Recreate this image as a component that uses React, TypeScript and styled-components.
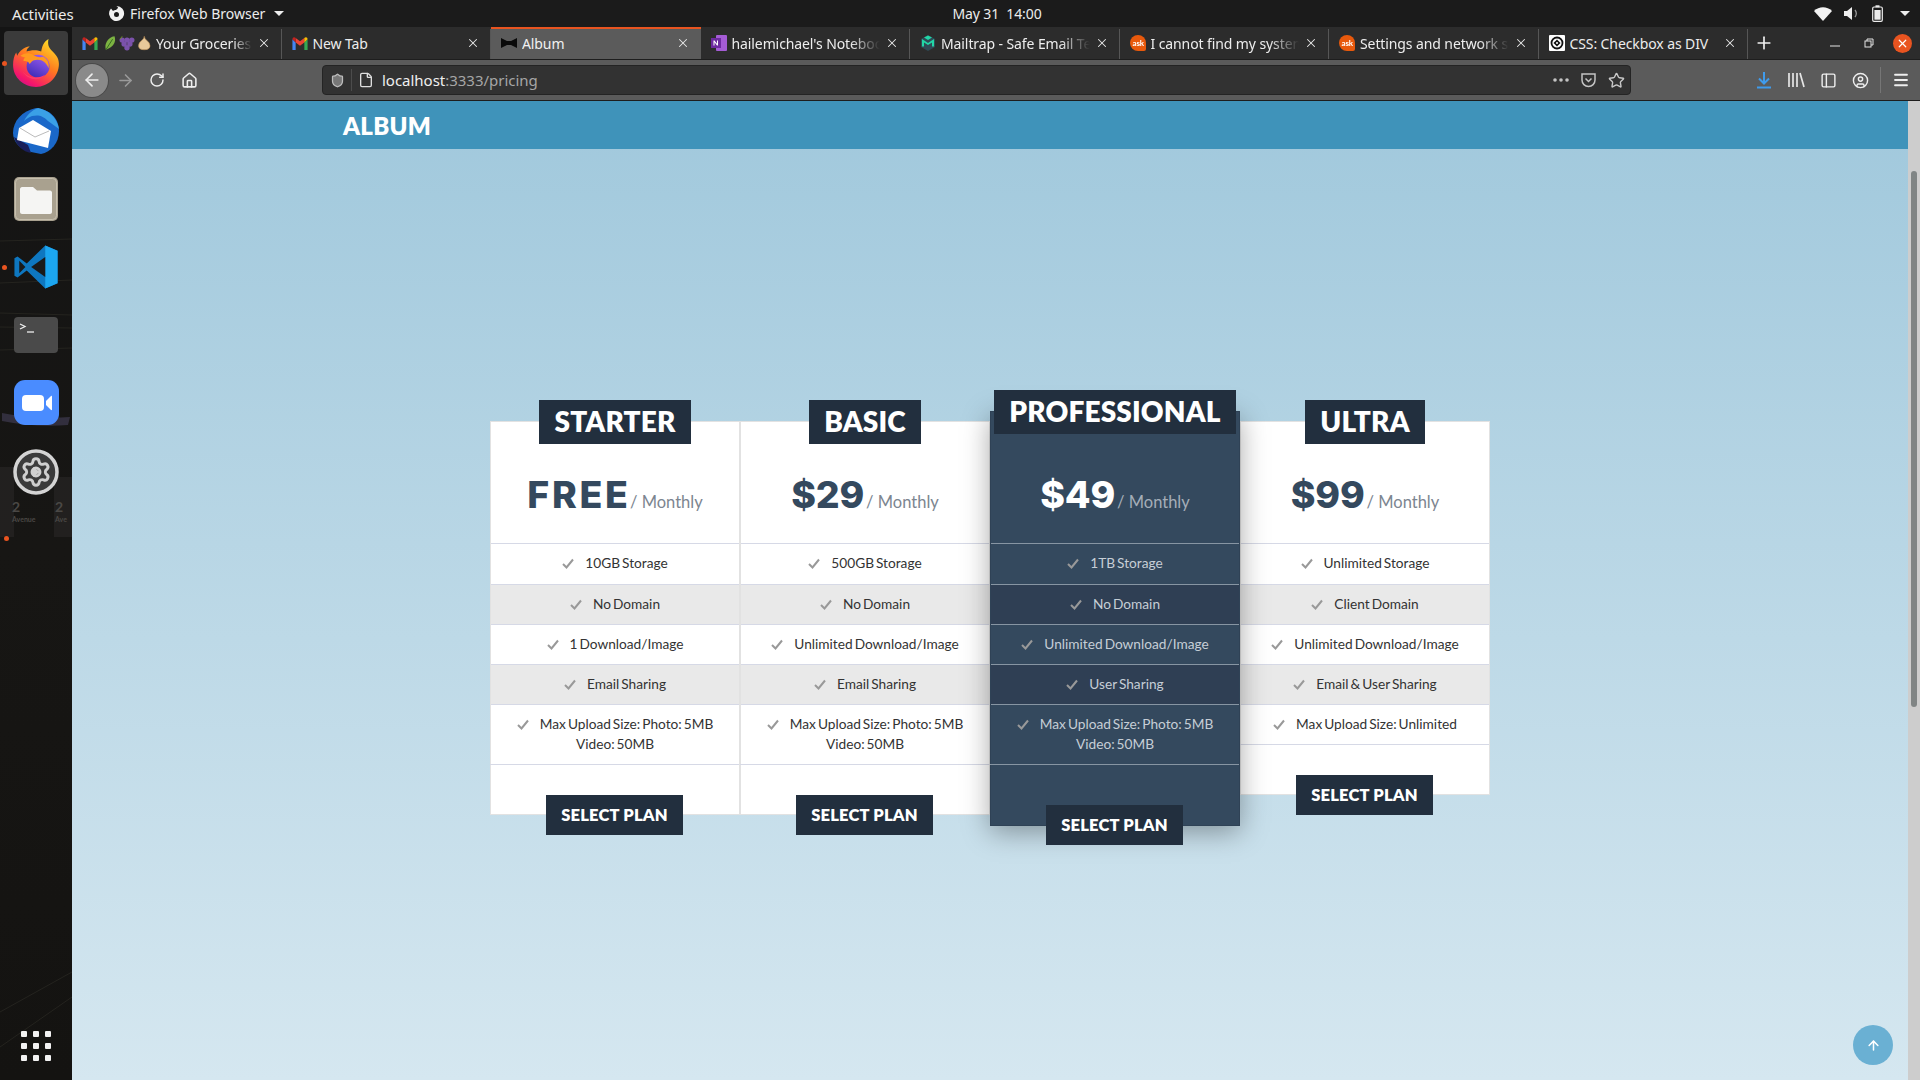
import React from "react";
import styled, { createGlobalStyle } from "styled-components";
import { ArrowLeft, ArrowRight, RotateCw, Home, Shield, File, Star, PanelLeft, CircleUser, Menu, X, Plus, Settings, ArrowUp } from "lucide-react";

const Global = createGlobalStyle`
  html, body { margin: 0; padding: 0; height: 100%; background: #1a1a1a; overflow: hidden; }
  * { box-sizing: border-box; }
  #root { height: 100%; }
`;
const UI = `"Noto Sans", "Open Sans", sans-serif`;
const WEB = `Lato, "Liberation Sans", sans-serif`;

const Screen = styled.div`
  width: 1920px; height: 1080px; display: flex; flex-direction: column; overflow: hidden; font-family: ${UI};
`;
const TopBar = styled.div`
  height: 27px; flex: none; background: #1b1b1b; color: #ececec; display: grid; grid-template-columns: 1fr auto 1fr;
  align-items: center; font-size: 14px; padding: 0 10px 0 12px;
`;
const TopLeft = styled.div`display: flex; align-items: center;`;
const Activities = styled.span`width: 96px; font-size: 15px; letter-spacing: -0.1px;`;
const AppName = styled.span`margin-left: 5px; width: 139px; white-space: nowrap;`;
const Clock = styled.div`letter-spacing: -0.1px; padding-right: 2px; white-space: pre; margin-left: 74px;`;
const TopRight = styled.div`display: flex; align-items: center; justify-content: flex-end; gap: 12px;`;
const Caret = styled.span`
  width: 0; height: 0; border-left: 5px solid transparent; border-right: 5px solid transparent; border-top: 5px solid #eee; margin-left: 5px;
`;
const Main = styled.div`flex: 1; display: flex; min-height: 0;`;
const Dock = styled.div`
  width: 72px; flex: none; position: relative; background: linear-gradient(180deg, #141414 0%, #171614 50%, #141311 100%);
  display: flex; flex-direction: column; align-items: center; padding-top: 4px;
`;
const DockArt = styled.svg`position: absolute; inset: 0; width: 72px; height: 1053px;`;
const DockSlot = styled.div<{ $h: number; $top?: number; $active?: boolean }>`
  position: relative; width: 64px; height: ${(p) => p.$h}px; margin-top: ${(p) => p.$top ?? 0}px; display: flex; align-items: center; justify-content: center; border-radius: 4px;
  background: ${(p) => (p.$active ? "#3b3b3b" : "transparent")};
`;
const RunDot = styled.span`
  position: absolute; left: -2px; top: calc(50% - 2px); width: 5px; height: 5px; border-radius: 50%; background: #e95420;
`;
const DockDot = styled.span`
  position: absolute; left: 4px; top: 509px; width: 5px; height: 5px; border-radius: 50%; background: #e95420;
`;
const DockGrid = styled.div`
  position: absolute; left: 21px; bottom: 19px; display: grid; grid-template-columns: repeat(3, 6px); gap: 6px;
  span { width: 6px; height: 6px; background: #f2f2f2; border-radius: 1px; }
`;
const Browser = styled.div`flex: 1; display: flex; flex-direction: column; min-width: 0;`;
const TabStrip = styled.div`
  height: 33px; flex: none; background: #2c2c2c; display: flex; border-bottom: 1px solid #1e1e1e;
`;
const Tab = styled.div<{ $active?: boolean }>`
  width: 209.5px; flex: none; display: flex; align-items: center; padding: 0 11px 2px 10px; gap: 5px; color: ${(p) => (p.$active ? "#f1f1f1" : "#ededed")};
  background: ${(p) => (p.$active ? "#5b5b5b" : "transparent")}; font-size: 14px; letter-spacing: -0.1px;
  border-top: 2px solid ${(p) => (p.$active ? "#e95420" : "transparent")};
  box-shadow: ${(p) => (p.$active ? "none" : "inset -1px 0 0 #565656")};
`;
const TabTitle = styled.span<{ $fade?: boolean }>`
  flex: 1; min-width: 0; white-space: nowrap; overflow: hidden;
  ${(p) => (p.$fade ? "mask-image: linear-gradient(90deg, #000 80%, transparent 100%);" : "")}
`;
const NewTab = styled.div`width: 32px; display: flex; align-items: center; justify-content: center; color: #efefef;`;
const WindowControls = styled.div`
  margin-left: auto; display: flex; align-items: center; gap: 19px; padding-right: 8px; color: #ddd;
`;
const WinClose = styled.span`
  width: 19px; height: 19px; border-radius: 50%; background: #e95420; display: flex; align-items: center; justify-content: center; color: #fff;
`;
const Toolbar = styled.div`
  height: 41px; flex: none; background: #5b5b5b; border-bottom: 1px solid #1d1d1d; display: flex; align-items: center; padding-left: 4px;
`;
const ToolBtn = styled.span<{ $round?: boolean; $dim?: boolean; $w?: number }>`
  width: ${(p) => p.$w ?? 32}px; height: 33px; flex: none; display: flex; align-items: center; justify-content: center;
  color: ${(p) => (p.$dim ? "#9a9a9a" : "#eeeeee")}; border-radius: 50%;
  ${(p) => (p.$round ? "background: #8a8a8a; box-shadow: 0 0 0 1px #4a4a4a;" : "")}
`;
const UrlBar = styled.div`
  margin-left: 116px; width: 1309px; height: 30px; flex: none; background: #323232; border: 1px solid #242424; border-radius: 4px;
  display: flex; align-items: center; padding-left: 1px; color: #bdbdbd;
`;
const UrlIcon = styled.span<{ $line?: boolean }>`
  width: 28px; height: 22px; display: flex; align-items: center; justify-content: center; ${(p) => (p.$line ? "border-right: 1px solid #4c4c4c;" : "")}
`;
const UrlText = styled.div`
  flex: 1; margin-left: 2px; font-size: 15px; color: #a6a6a6; letter-spacing: -0.02px; b { font-weight: 400; color: #efefef; }
`;
const UrlEnd = styled.div`display: flex; align-items: center; gap: 11px; padding-right: 5px;`;
const ToolEnd = styled.div`display: flex; align-items: center; margin-left: auto; padding-right: 3px; width: 272px; justify-content: flex-end;`;
const Sep = styled.span`width: 1px; height: 26px; background: #767676; margin: 0 4px;`;
const Viewport = styled.div`flex: 1; display: flex; min-height: 0;`;
const Content = styled.div`
  flex: 1; position: relative; display: flex; flex-direction: column; background: linear-gradient(180deg, #a0c8dc 0%, #d5e7f0 100%);
`;
const SiteHeader = styled.header`
  height: 48px; flex: none; background: #3f93ba; color: #fff; display: flex; align-items: center; padding-left: 271px;
  font: 800 24px ${WEB}; letter-spacing: 0.25px;
`;
const Pricing = styled.section`
  display: flex; justify-content: center; align-items: flex-start; padding-top: 272px;
`;
const Column = styled.div<{ $featured?: boolean }>`
  width: 250px; display: flex; flex-direction: column; align-items: stretch; position: relative;
  background: ${(p) => (p.$featured ? "#34495e" : "#fff")}; color: ${(p) => (p.$featured ? "#c6ced6" : "#333")};
  border: 1px solid ${(p) => (p.$featured ? "#2f4256" : "#e2e2e2")};
  ${(p) => (p.$featured ? "margin-top: -10px; z-index: 2; box-shadow: 0 6px 26px rgba(0,0,0,.35);" : "")}
`;
const Title = styled.h2`
  align-self: center; margin: -22px 0 0; height: 44px; padding: 0 15px; background: #222f3e; color: #fff;
  font: 800 28px/42px ${WEB}; letter-spacing: 0.15px; white-space: nowrap;
`;
const PriceBox = styled.div<{ $featured?: boolean }>`
  height: ${(p) => (p.$featured ? "109px" : "99px")}; display: flex; align-items: baseline; justify-content: center; padding-top: ${(p) => (p.$featured ? "35px" : "25px")};
`;
const Amount = styled.span<{ $featured?: boolean; $spread?: boolean }>`
  font: 800 37.5px/52px Inter, sans-serif; color: ${(p) => (p.$featured ? "#fff" : "#34495e")};
  letter-spacing: ${(p) => (p.$spread ? "2.7px" : "-0.2px")}; margin-right: ${(p) => (p.$spread ? "-2.7px" : "0")};
`;
const Period = styled.span<{ $featured?: boolean }>`
  font: 400 16.5px ${WEB}; color: ${(p) => (p.$featured ? "#a5aeb8" : "#7c8590")}; margin-left: 2px;
`;
const Features = styled.ul`list-style: none; margin: 0; padding: 0;`;
const Feature = styled.li<{ $featured?: boolean }>`
  border-top: 1px solid ${(p) => (p.$featured ? "#8795a3" : "#d6d9e6")}; padding: 9px 10px 10px; text-align: center; font: 400 13.7px/20px ${WEB}; white-space: pre-line; word-spacing: -1.5px;
  &:nth-child(even) { background: ${(p) => (p.$featured ? "#2f3f54" : "#e9e9e9")}; }
  &:first-child { padding-bottom: 11px; }
`;
const Check = styled.svg`width: 12px; height: 11px; margin-right: 11px; vertical-align: -1px;`;
const Foot = styled.div<{ $featured?: boolean }>`
  border-top: 1px solid ${(p) => (p.$featured ? "#8795a3" : "#d6d9e6")}; display: flex; justify-content: center; padding-top: ${(p) => (p.$featured ? "40px" : "30px")}; margin-left: -1px; height: ${(p) => (p.$featured ? "61px" : "50px")};
`;
const SelectBtn = styled.button`
  width: 137px; height: 40px; flex: none; background: #222f3e; color: #fff; border: 0; padding: 0; font: 800 16.5px ${WEB}; letter-spacing: 0.2px; position: relative; z-index: 3;
`;
const ToTop = styled.div`
  position: absolute; right: 15px; bottom: 15px; width: 40px; height: 40px; border-radius: 50%; background: #6ab0d3; color: #fff;
  display: flex; align-items: center; justify-content: center;
`;
const Scrollbar = styled.div`width: 12px; flex: none; background: #cdcdcd; padding: 70px 3px 0 3px;`;
const Thumb = styled.div`height: 536px; background: #808585; border-radius: 3px;`;

const Gmail = () => (
  <svg width="16" height="13" viewBox="0 0 14 12">
    <path d="M0 2v10h3V5L0 2z" fill="#4285f4" /><path d="M11 5v7h3V2l-3 3z" fill="#34a853" />
    <path d="M3 5l4 3 4-3V1l-4 3-4-3z" fill="#ea4335" /><path d="M0 2c0-2 2-2.500 3-1v4L0 2z" fill="#c5221f" /><path d="M14 2c0-2-2-2.500-3-1v4l3-3z" fill="#fbbc04" />
  </svg>
);
const Groceries = () => (
  <svg width="48" height="16" viewBox="0 0 50 16">
    <path d="M3 15C1 9 5 2 12 1c2 6-1 11-9 14z" fill="#7cb342" /><path d="M3 15L10 4" stroke="#33691e" />
    <g fill="#7b52ab"><circle cx="20" cy="5" r="2.800" /><circle cx="25" cy="5" r="2.800" /><circle cx="30" cy="5" r="2.800" /><circle cx="22" cy="9" r="2.800" /><circle cx="28" cy="9" r="2.800" /><circle cx="25" cy="13" r="2.800" /></g>
    <path d="M18 4l2-3" stroke="#6b8e23" /><path d="M43 1c0 4-6 5-6 10 0 3 3 4 6 4s6-1 6-4c0-5-6-6-6-10z" fill="#e8c99a" stroke="#b98b50" strokeWidth=".6" />
  </svg>
);
const Bowtie = () => (
  <svg width="16" height="10" viewBox="0 0 16 10"><path d="M0 0l6 3h4l6-3v10l-6-3H6l-6 3z" fill="#0a0a0a" /></svg>
);
const OneNote = () => (
  <svg width="16" height="16" viewBox="0 0 16 16">
    <rect x="5" y="0" width="11" height="16" rx="1" fill="#a55cd6" /><rect x="0" y="3" width="10" height="10" fill="#6d2b9f" />
    <path d="M2.500 10.500v-5h1l2.500 3.200V5.500h1v5h-1L3.500 7.300v3.200z" fill="#fff" />
  </svg>
);
const Mailtrap = () => (
  <svg width="16" height="16" viewBox="0 0 16 16">
    <path d="M8 0l7 4v8l-7 4-7-4V4z" fill="#2f4a56" /><path d="M2 4l6 4 6-4v7.500h-2V7.500L8 10 4 7.500v4H2z" fill="#22d6a6" /><path d="M4 2.500l4-2 4 2-4 2.500z" fill="#22d6a6" />
  </svg>
);
const AskBadge = styled.span`
  width: 16px; height: 16px; border-radius: 50% 50% 50% 2px; transform: scaleX(-1); background: #e8590c; display: inline-flex; align-items: center; justify-content: center; flex: none;
  i { transform: scaleX(-1); font: 700 8px Lato, sans-serif; color: #fff; }
`;
const Ask = () => <AskBadge><i>ask</i></AskBadge>;
const Tricks = () => (
  <svg width="16" height="16" viewBox="0 0 16 16">
    <rect width="16" height="16" rx="1" fill="#fff" /><circle cx="8" cy="8" r="5.500" fill="none" stroke="#111" strokeWidth="1.800" /><rect x="5.500" y="5.500" width="5" height="5" transform="rotate(45 8 8)" fill="#111" /><circle cx="8" cy="8" r="1" fill="#fff" />
  </svg>
);
const Firefox = ({ size = 50 }: { size?: number }) => (
  <svg width={size} height={size} viewBox="0 0 48 48">
    <defs>
      <linearGradient id="ffa" x1="0.8" y1="0" x2="0.2" y2="1"><stop offset="0" stopColor="#ffe226" /><stop offset=".45" stopColor="#ff7a1f" /><stop offset=".85" stopColor="#f5156c" /><stop offset="1" stopColor="#c4148c" /></linearGradient>
      <linearGradient id="ffb" x1="0.7" y1="0" x2="0.2" y2="1"><stop offset="0" stopColor="#9a5cf0" /><stop offset="1" stopColor="#3b2bb5" /></linearGradient>
    </defs>
    <path d="M36 1c-1 5 0 8 3 11 4 4 7 7 7 13 0 12-10 22-22 22S2 38 2 26c0-5 1-9 3-12l1 3c2-4 6-8 12-9-2 2-3 3-3 5 3-1 9-2 14 0 1-5 2-9 7-12z" fill="url(#ffa)" />
    <circle cx="26" cy="27" r="11" fill="url(#ffb)" />
    <path d="M9 17c4-3 9-3 12-1 3 2 6 3 10 2 4 2 6 6 5 11-2-6-7-9-12-8-3 0-5 2-6 4-1-2-2-3-6-3 0-2 1-3 2-3-2-1-4-1-5-2z" fill="#ff9a1f" />
    <path d="M11 32c4 6 15 8 22 3-4 6-16 7-22-3z" fill="#ff3b6b" />
  </svg>
);
const Thunderbird = () => (
  <svg width="48" height="48" viewBox="0 0 48 48">
    <path d="M24 1c13 1 23 10 23 23 0 12-8 21-18 23l-10-2C9 43 1 35 1 26 1 14 10 4 24 1z" fill="#1a68c9" />
    <path d="M26 1c10 2 19 9 21 21L36 14C30 8 26 8 20 9c-3 1-6 3-8 5 3-6 8-11 14-13z" fill="#3aa0e6" />
    <path d="M2 30c2 8 9 15 17 16l-3-8z" fill="#1a1f5a" />
    <path d="M7 21L21 13 39 24 36 41 5 33z" fill="#fff" /><path d="M8 21l15 9 14-6" fill="none" stroke="#bbb" strokeWidth="1" />
  </svg>
);
const Files = () => (
  <svg width="44" height="44" viewBox="0 0 44 44">
    <rect width="44" height="44" rx="5" fill="#a9a18f" /><rect x="1.500" y="1.500" width="41" height="41" rx="4" fill="none" stroke="#c7c0af" />
    <path d="M6 12c0-1 1-2 2-2h11l4 3.500h13c1 0 2 1 2 2V35c0 1-1 2-2 2H8c-1 0-2-1-2-2z" fill="#f5f5f3" />
  </svg>
);
const VSCode = () => (
  <svg width="44" height="44" viewBox="0 0 100 100">
    <path d="M71 99L29 58 8 74 1 70V30l7-4 21 16L71 1l28 12v74z" fill="#0e77c0" />
    <path d="M71 99l28-12V13L71 1z" fill="#1ca6f0" />
    <path d="M71 27L39 50l32 23z" fill="#1a1a1a" /><path d="M12 36l14 14-14 14z" fill="#1a1a1a" />
  </svg>
);
const Terminal = () => (
  <svg width="44" height="36" viewBox="0 0 44 36">
    <rect width="44" height="36" rx="4" fill="#4a4a4a" /><path d="M6 7l5 2.500L6 12" fill="none" stroke="#eee" strokeWidth="1.300" /><path d="M13 15h7" stroke="#eee" strokeWidth="1.300" />
  </svg>
);
const Zoom = () => (
  <svg width="45" height="45" viewBox="0 0 45 45">
    <rect width="45" height="45" rx="11" fill="#4a8cff" /><rect x="8" y="15" width="22" height="16" rx="4" fill="#fff" /><path d="M32 21l5-5c.5-.3 1-.2 1 .5v13c0 .7-.5.8-1 .5l-5-5z" fill="#fff" />
  </svg>
);
const SettingsApp = () => (
  <svg width="46" height="46" viewBox="0 0 46 46">
    <circle cx="23" cy="23" r="21" fill="#3b3b3b" stroke="#d4d4d4" strokeWidth="3.500" />
    <Settings x="7" y="7" width="32" height="32" color="#cfcfcf" strokeWidth="2.200" />
    <path d="M20 18l7 5-7 5z" fill="#cfcfcf" />
  </svg>
);
const Pocket = () => (
  <svg width="17" height="17" viewBox="0 0 17 17" fill="none" stroke="#c4c4c4" strokeWidth="1.500"><path d="M2 2h13v6a6.500 6.500 0 0 1-13 0z" /><path d="M5.500 6.500l3 3 3-3" /></svg>
);
const Library = () => (
  <svg width="18" height="16" viewBox="0 0 18 16" stroke="#e6e6e6" strokeWidth="1.700" fill="none"><path d="M2 1v14M6 1v14M10 1v14M13 1l4 14" /></svg>
);
const DownloadDone = () => (
  <svg width="16" height="18" viewBox="0 0 16 18" fill="none" stroke="#3f9bec" strokeWidth="2"><path d="M8 1v11M3 7.500L8 12.500l5-5M1 16.500h14" /></svg>
);
const Restore = () => (
  <svg width="10" height="10" viewBox="0 0 10 10" fill="none" stroke="#e4e4e4"><rect x="1" y="3" width="6" height="6" /><path d="M3 3V1h6v6H7" /></svg>
);
const Minimize = () => <svg width="15" height="10" viewBox="0 0 15 10"><path d="M0 8h10" stroke="#e4e4e4" /></svg>;
const WifiFull = () => (
  <svg width="18" height="14" viewBox="0 0 18 14"><path d="M9 14L0 4c5-5 13-5 18 0z" fill="#f2f2f2" /></svg>
);
const VolumeIcon = () => (
  <svg width="16" height="15" viewBox="0 0 16 15"><path d="M0 5h3l5-4v13l-5-4H0z" fill="#eee" /><path d="M11 4c1.500 2 1.500 5 0 7" fill="none" stroke="#999" strokeWidth="1.300" /></svg>
);
const Battery = () => (
  <svg width="11" height="17" viewBox="0 0 11 17"><rect x=".7" y="2" width="9.600" height="14.300" rx="1.300" fill="none" stroke="#eee" strokeWidth="1.200" /><rect x="3.500" y=".3" width="4" height="2" fill="#eee" /><rect x="2.400" y="5" width="6.200" height="9.700" fill="#eee" /></svg>
);
const FoxMark = () => (
  <svg width="17" height="17" viewBox="0 0 17 17"><path d="M8.500 1A7.500 7.500 0 1 1 3 3.500L5 6c1-1 2-1 3-1l2-2C10 2 9 1.500 8.500 1z" fill="#f2f2f2" /><circle cx="8.500" cy="9.500" r="2.500" fill="#1b1b1b" /></svg>
);

const tabs: { icon: React.ReactNode; title: string; fade?: boolean; active?: boolean }[] = [
  { icon: <><Gmail /><Groceries /></>, title: "Your Groceries", fade: true },
  { icon: <Gmail />, title: "New Tab" },
  { icon: <Bowtie />, title: "Album", active: true },
  { icon: <OneNote />, title: "hailemichael's Notebook", fade: true },
  { icon: <Mailtrap />, title: "Mailtrap - Safe Email Testing", fade: true },
  { icon: <Ask />, title: "I cannot find my system settings", fade: true },
  { icon: <Ask />, title: "Settings and network settings", fade: true },
  { icon: <Tricks />, title: "CSS: Checkbox as DIV" },
];

const UPLOAD = "Max Upload Size: Photo: 5MB\nVideo: 50MB";
const plans = [
  { name: "STARTER", price: "FREE", features: ["10GB Storage", "No Domain", "1 Download/Image", "Email Sharing", UPLOAD] },
  { name: "BASIC", price: "$29", features: ["500GB Storage", "No Domain", "Unlimited Download/Image", "Email Sharing", UPLOAD] },
  { name: "PROFESSIONAL", price: "$49", featured: true, features: ["1TB Storage", "No Domain", "Unlimited Download/Image", "User Sharing", UPLOAD] },
  { name: "ULTRA", price: "$99", features: ["Unlimited Storage", "Client Domain", "Unlimited Download/Image", "Email & User Sharing", "Max Upload Size: Unlimited"] },
];

const CheckMark = () => (
  <Check viewBox="0 0 12 11"><path d="M1 6l3.500 3.500L11 1.500" fill="none" stroke="#999" strokeWidth="2" /></Check>
);

export default function App() {
  return (
    <Screen>
      <Global />
      <TopBar>
        <TopLeft>
          <Activities>Activities</Activities>
          <FoxMark />
          <AppName>Firefox Web Browser</AppName>
          <Caret />
        </TopLeft>
        <Clock>May 31  14:00</Clock>
        <TopRight>
          <WifiFull />
          <VolumeIcon />
          <Battery />
          <Caret />
        </TopRight>
      </TopBar>
      <Main>
        <Dock>
          <DockArt viewBox="0 0 72 1053">
            <g stroke="#2b2a24" strokeWidth="1" opacity=".7">
              <path d="M0 214l72-2M0 256l72-3M0 286l72 2M0 300l72 1M0 323l72-2" />
              <path d="M0 985l72-40M0 1020l72-50" />
            </g>
            <path d="M2 386c20 4 45 6 68 4l-2 8c-22 2-46 0-66-4z" fill="#4a4660" opacity=".55" />
            <path d="M0 440h14v70H0zM54 450h18v60H54z" fill="#2a2826" opacity=".6" />
            <g fill="#4a4845" fontFamily="Lato, sans-serif" fontWeight="700">
              <text x="12" y="485" fontSize="14">2</text>
              <text x="55" y="485" fontSize="14">2</text>
              <text x="12" y="495" fontSize="7">Avenue</text>
              <text x="55" y="495" fontSize="7">Ave</text>
            </g>
          </DockArt>
          <DockSlot $h={64} $active><RunDot /><Firefox /></DockSlot>
          <DockSlot $h={72}><Thunderbird /></DockSlot>
          <DockSlot $h={44} $top={10}><Files /></DockSlot>
          <DockSlot $h={90} $top={1}><RunDot /><VSCode /></DockSlot>
          <DockSlot $h={36} $top={5}><Terminal /></DockSlot>
          <DockSlot $h={45} $top={27}><Zoom /></DockSlot>
          <DockSlot $h={46} $top={24}><SettingsApp /></DockSlot>
          <DockDot />
          <DockGrid>{Array.from({ length: 9 }).map((_, i) => <span key={i} />)}</DockGrid>
        </Dock>
        <Browser>
          <TabStrip>
            {tabs.map((t, i) => (
              <Tab key={i} $active={t.active}>
                {t.icon}
                <TabTitle $fade={t.fade}>{t.title}</TabTitle>
                <X size={14} strokeWidth={1.8} color="#e8e8e8" />
              </Tab>
            ))}
            <NewTab><Plus size={20} /></NewTab>
            <WindowControls>
              <Minimize />
              <Restore />
              <WinClose><X size={13} strokeWidth={2.2} /></WinClose>
            </WindowControls>
          </TabStrip>
          <Toolbar>
            <ToolBtn $round><ArrowLeft size={20} /></ToolBtn>
            <ToolBtn $dim $w={34}><ArrowRight size={19} /></ToolBtn>
            <ToolBtn $w={30}><RotateCw size={16} strokeWidth={2.2} /></ToolBtn>
            <ToolBtn $w={34}><Home size={17} strokeWidth={2.2} /></ToolBtn>
            <UrlBar>
              <UrlIcon $line><Shield size={15} fill="#777" strokeWidth={2} /></UrlIcon>
              <UrlIcon><File size={16} color="#dedede" /></UrlIcon>
              <UrlText><b>localhost</b>:3333/pricing</UrlText>
              <UrlEnd>
                <svg width="16" height="4" viewBox="0 0 16 4" fill="#c4c4c4"><circle cx="2" cy="2" r="1.800" /><circle cx="8" cy="2" r="1.800" /><circle cx="14" cy="2" r="1.800" /></svg>
                <Pocket />
                <Star size={17} color="#c8c8c8" strokeWidth={2} />
              </UrlEnd>
            </UrlBar>
            <ToolEnd>
              <ToolBtn $w={32}><DownloadDone /></ToolBtn>
              <ToolBtn $w={32}><Library /></ToolBtn>
              <ToolBtn $w={32}><PanelLeft size={17} /></ToolBtn>
              <ToolBtn $w={32}><CircleUser size={17} /></ToolBtn>
              <Sep />
              <ToolBtn $w={32}><Menu size={18} strokeWidth={2.4} /></ToolBtn>
            </ToolEnd>
          </Toolbar>
          <Viewport>
            <Content>
              <SiteHeader>ALBUM</SiteHeader>
              <Pricing>
                {plans.map((p) => (
                  <Column key={p.name} $featured={p.featured}>
                    <Title>{p.name}</Title>
                    <PriceBox $featured={p.featured}>
                      <Amount $featured={p.featured} $spread={p.price === "FREE"}>{p.price}</Amount>
                      <Period $featured={p.featured}>/ Monthly</Period>
                    </PriceBox>
                    <Features>
                      {p.features.map((f, i) => (
                        <Feature key={i} $featured={p.featured}><CheckMark />{f}</Feature>
                      ))}
                    </Features>
                    <Foot $featured={p.featured}><SelectBtn>SELECT PLAN</SelectBtn></Foot>
                  </Column>
                ))}
              </Pricing>
              <ToTop><ArrowUp size={15} strokeWidth={2.4} /></ToTop>
            </Content>
            <Scrollbar><Thumb /></Scrollbar>
          </Viewport>
        </Browser>
      </Main>
    </Screen>
  );
}
